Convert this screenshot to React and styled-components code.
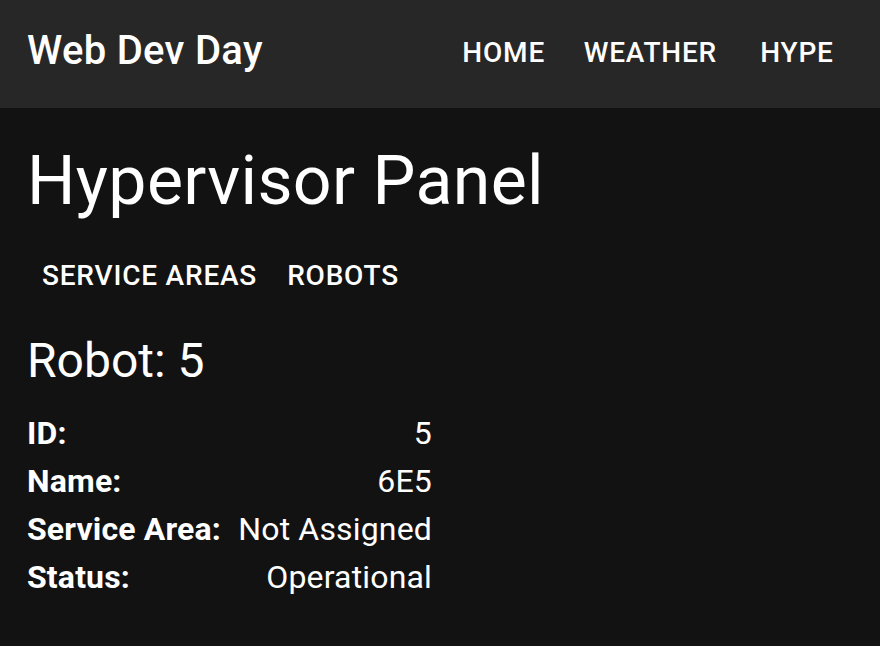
import React from "react";
import styled, { createGlobalStyle } from "styled-components";

const GlobalStyle = createGlobalStyle`
  html, body {
    margin: 0;
    padding: 0;
    background: #121212;
    color: #ffffff;
    font-family: Roboto, "Liberation Sans", sans-serif;
  }
  #root {
    min-height: 646px;
  }
`;

const AppBar = styled.header`
  height: 108px;
  background: #272727;
  display: flex;
  align-items: center;
  padding: 0 19px 7px 27px;
  box-sizing: border-box;
`;

AppBar.Title = styled.h6`
  margin: 0;
  flex: 1;
  font-size: 40px;
  line-height: 64px;
  font-weight: 500;
  letter-spacing: 0.0075em;
`;

const NavButton = styled.a`
  min-width: 128px;
  box-sizing: border-box;
  margin-top: 4px;
  padding: 0 16px;
  text-align: center;
  font-size: 28px;
  line-height: 49px;
  font-weight: 500;
  letter-spacing: 0.02857em;
  text-transform: uppercase;
  color: #ffffff;
  cursor: pointer;
`;

const Main = styled.main`
  padding: 0 27px;
`;

const Heading = styled.h1`
  margin: 31px 0 0;
  font-size: 68px;
  line-height: 84px;
  font-weight: 400;
  letter-spacing: 0.005em;
`;

const Tabs = styled.nav`
  display: flex;
  margin-top: 33px;
`;

const Tab = styled.span`
  padding: 0 15px;
  font-size: 28px;
  line-height: 40px;
  font-weight: 500;
  letter-spacing: 0.02857em;
  text-transform: uppercase;
  cursor: pointer;
`;

const RobotTitle = styled.h2`
  margin: 33px 0 0;
  font-size: 48px;
  line-height: 64px;
  font-weight: 400;
`;

const Details = styled.dl`
  margin: 16px 0 0;
  width: 405px;
  display: grid;
  grid-template-columns: auto 1fr;
  column-gap: 14px;
  font-size: 32px;
  line-height: 48px;
  letter-spacing: 0.005em;
`;

Details.Label = styled.dt`
  font-weight: 700;
  white-space: nowrap;
`;

Details.Value = styled.dd`
  margin: 0;
  text-align: right;
  font-weight: 400;
  white-space: nowrap;
`;

const robot = {
  id: 5,
  name: "6E5",
  serviceArea: null,
  status: "Operational",
};

const App = () => {
  const rows = [
    ["ID:", robot.id],
    ["Name:", robot.name],
    ["Service Area:", robot.serviceArea || "Not Assigned"],
    ["Status:", robot.status],
  ];
  return (
    <>
      <GlobalStyle />
      <AppBar>
        <AppBar.Title>Web Dev Day</AppBar.Title>
        <NavButton>Home</NavButton>
        <NavButton>Weather</NavButton>
        <NavButton>Hype</NavButton>
      </AppBar>
      <Main>
        <Heading>Hypervisor Panel</Heading>
        <Tabs>
          <Tab>Service Areas</Tab>
          <Tab>Robots</Tab>
        </Tabs>
        <RobotTitle>Robot: {robot.id}</RobotTitle>
        <Details>
          {rows.map(([label, value]) => (
            <React.Fragment key={label}>
              <Details.Label>{label}</Details.Label>
              <Details.Value>{value}</Details.Value>
            </React.Fragment>
          ))}
        </Details>
      </Main>
    </>
  );
};

export default App;
